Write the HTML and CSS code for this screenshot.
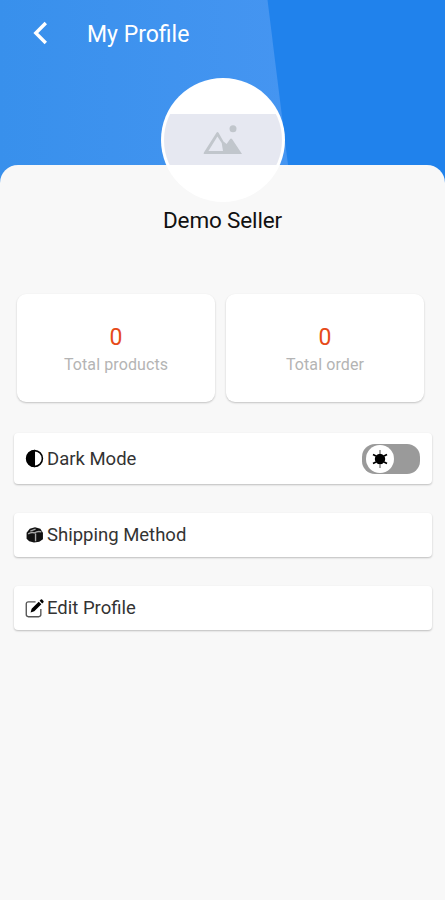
FILE: index.html
```html
<!DOCTYPE html>
<html lang="en">
<head>
<meta charset="utf-8">
<title>My Profile</title>
<link rel="stylesheet" href="styles.css">
</head>
<body>
<div class="screen">
  <header class="hero">
    <svg class="hero-shade" viewBox="0 0 445 185" preserveAspectRatio="none" aria-hidden="true">
      <defs><linearGradient id="shade"><stop offset="0" stop-color="#3890ec"/><stop offset="1" stop-color="#4595f1"/></linearGradient></defs>
      <path d="M0 0H267.500L288 165V185H0Z" fill="url(#shade)"/>
    </svg>
    <div class="bar">
      <svg class="back" viewBox="0 0 16 24" aria-hidden="true"><path d="M13.800 2L3.800 12L13.800 22" fill="none" stroke="#fff" stroke-width="3.400"/></svg>
      <h1 class="title">My Profile</h1>
    </div>
  </header>
  <main class="sheet">
    <div class="avatar">
      <div class="photo">
        <svg class="picture" viewBox="0 0 40 30" aria-hidden="true">
          <path fill="#c1c6cc" fill-rule="evenodd" d="M1.500 29Q0 29 .9 27.500L13.300 8Q14.500 6.200 15.700 8L20.500 16.500L23.600 19L27 14.200Q28 12.700 29.200 14.200L39 29ZM5.400 26H20L18.700 18L14.400 11.600Z"/>
          <circle cx="30" cy="3.700" r="3.500" fill="#c1c6cc"/>
        </svg>
      </div>
    </div>
    <h2 class="name">Demo Seller</h2>
    <section class="stats">
      <div class="stat"><span class="count">0</span><span class="caption">Total products</span></div>
      <div class="stat"><span class="count">0</span><span class="caption">Total order</span></div>
    </section>
    <section class="options">
      <div class="option option-tall">
        <svg class="icon" viewBox="0 0 18 18" aria-hidden="true"><circle cx="9" cy="9" r="7.500" fill="#fff" stroke="#000" stroke-width="1.500"/><path d="M9.500 .8A8.200 8.200 0 0 0 9.500 17.200Z"/></svg>
        <span class="label">Dark Mode</span>
        <span class="toggle"><span class="knob">
          <svg class="sun" viewBox="0 0 18 18" aria-hidden="true"><circle cx="9" cy="9" r="5.200"/><path d="M2 4.500L5 6M13 6L16 4.500M2 13.500L5 12M13 12L16 13.500" stroke="#000" stroke-width="1.800"/><path d="M9 0V4M9 14V18" stroke="#777" stroke-width="1.300"/></svg>
        </span></span>
      </div>
      <div class="option">
        <svg class="icon" viewBox="0 0 18 18" aria-hidden="true">
          <path fill="#111" d="M1.500 6.500L4.500 2.700L9.500 1.200L14.500 2.700L17 6.500V12.500L13.500 15L8.500 15.700L4 14.500L1.500 12Z"/>
          <path fill="none" stroke="#aaa" stroke-width="1.300" d="M3 7.500Q6 5.500 9 6.500Q12 4.500 15.500 5.500M5 4.800L10 3M10 7V14.500"/>
        </svg>
        <span class="label">Shipping Method</span>
      </div>
      <div class="option">
        <svg class="icon" viewBox="0 0 18 18" aria-hidden="true">
          <path d="M10 2.700H3.200Q1.200 2.700 1.200 4.700V14.800Q1.200 16.800 3.200 16.800H13Q15 16.800 15 14.800V9.500" fill="none" stroke="#555" stroke-width="1.300"/>
          <path d="M5.300 12.700L6.300 9.200L13 2.500L15.500 5L8.800 11.700ZM13.800 1.700L15 .5Q15.600 0 16.200 .5L17.500 1.800Q18 2.400 17.500 3L16.300 4.200Z"/>
        </svg>
        <span class="label">Edit Profile</span>
      </div>
    </section>
  </main>
</div>
</body>
</html>
```
FILE: styles.css
```css
* { box-sizing: border-box; }
body {
  margin: 0;
  background: #f8f8f8;
  font-family: Roboto, "Liberation Sans", sans-serif;
  color: #333;
}
.screen { height: 900px; overflow: hidden; }
.hero {
  position: relative;
  height: 185px;
  background: #2082ec;
}
.hero-shade { position: absolute; inset: 0; width: 100%; height: 100%; }
.bar {
  position: relative;
  display: flex;
  align-items: center;
  height: 70px;
  padding-left: 32px;
}
.back { width: 16px; height: 24px; margin-top: -4px; }
.title {
  margin: 0 0 0 39px;
  font-size: 23px;
  font-weight: 400;
  line-height: 30px;
  color: #fff;
}
.sheet {
  position: relative;
  height: 736px;
  margin-top: -20px;
  border-radius: 18px 18px 0 0;
  background: #f8f8f8;
}
.avatar {
  position: absolute;
  top: -87px;
  left: 161px;
  width: 124px;
  height: 124px;
  padding: 3px;
  border-radius: 50%;
  background: #fff;
}
.photo {
  display: flex;
  align-items: center;
  justify-content: center;
  width: 118px;
  height: 118px;
  border-radius: 50%;
  background: linear-gradient(#fff 33px, #e6e8f1 33px, #e6e8f1 84px, #fff 84px);
}
.picture { width: 40px; height: 30px; margin-top: -1px; }
.name {
  margin: 0;
  padding-top: 40px;
  height: 129px;
  font-size: 22.5px;
  font-weight: 400;
  line-height: 30px;
  letter-spacing: -.15px;
  text-align: center;
  color: #111;
}
.stats { display: flex; gap: 11px; padding: 0 21px 0 17px; }
.stat {
  flex: 1;
  display: flex;
  flex-direction: column;
  align-items: center;
  height: 108px;
  padding-top: 29px;
  border-radius: 9px;
  background: #fff;
  box-shadow: 0 1px 2px rgba(0, 0, 0, .22);
}
.count { font-size: 23px; line-height: 30px; color: #e64a19; }
.caption { font-size: 16px; line-height: 24px; letter-spacing: .1px; color: #b4b4b4; }
.options {
  display: flex;
  flex-direction: column;
  gap: 29px;
  padding: 31px 13px 0 14px;
}
.option {
  display: flex;
  align-items: center;
  height: 44px;
  padding: 0 12px 0 11px;
  border-radius: 4px;
  background: #fff;
  box-shadow: 0 1px 2px rgba(0, 0, 0, .24);
}
.option-tall { height: 51px; }
.icon { width: 19px; height: 19px; margin-right: 3px; }
.label { font-size: 18.5px; line-height: 26px; }
.toggle {
  display: flex;
  align-items: center;
  width: 58px;
  height: 30px;
  margin-left: auto;
  padding-left: 4px;
  border-radius: 13px;
  background: #9a9a9a;
}
.knob {
  display: flex;
  align-items: center;
  justify-content: center;
  width: 28px;
  height: 28px;
  border-radius: 50%;
  background: #fff;
}
.sun { width: 18px; height: 18px; }
```
